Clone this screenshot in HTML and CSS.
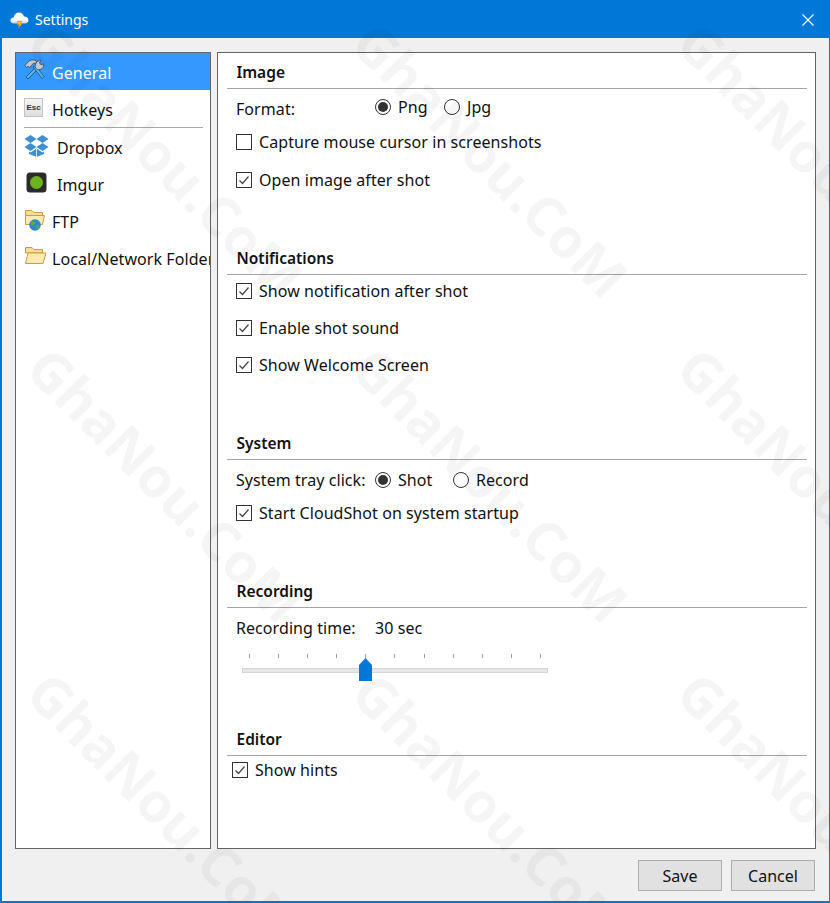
FILE: index.html
```html
<!DOCTYPE html>
<html lang="en">
<head>
<meta charset="utf-8">
<title>Settings</title>
<link rel="stylesheet" href="styles.css">
</head>
<body>
<div class="window">
  <header class="titlebar">
    <svg class="app-icon" width="19" height="18" viewBox="0 0 19 18"><defs><linearGradient id="cloud" x1="0" y1="0" x2="0" y2="1"><stop offset="0" stop-color="#fff"/><stop offset=".65" stop-color="#fff"/><stop offset="1" stop-color="#c9ced3"/></linearGradient></defs><path d="M4 12.5 C1.6 12.5 .5 11 .5 9.4 C.5 7.6 2 6.4 3.6 6.6 C4 3.6 6.2 1.5 9 1.5 C11.6 1.5 13.4 3.2 14 5.6 C16.4 5.5 18.5 7.2 18.5 9.3 C18.5 11.2 17 12.5 15 12.5 Z" fill="url(#cloud)"/><path d="M7.5 10 H12 L10.6 12.4 H12.4 L8.2 17 L9.2 13.6 H7 Z" fill="#f6c21a" stroke="#b98300" stroke-width=".4"/></svg>
    <span class="title">Settings</span>
    <svg class="close" width="12" height="12" viewBox="0 0 12 12"><path d="M.5 .5 L11.5 11.5 M11.5 .5 L.5 11.5" stroke="#fff" stroke-width="1.1" fill="none"/></svg>
  </header>
  <div class="content">
    <div class="panels">
      <nav class="sidebar">
        <div class="nav-item active">
          <svg class="ico ico-tools" width="21" height="21" viewBox="0 0 21 21"><path d="M11.5 8.5 L2 18 L4 20 L13.5 10.5 Z" fill="#58b2ea" stroke="#1f4f73" stroke-width=".8"/><path d="M9 8 L18 19.5 L20 17.5 L11.5 6 Z" fill="#58b2ea" stroke="#1f4f73" stroke-width=".8"/><path d="M1 6.5 L5 2 C7.5 .6 10 .6 12.5 1.8 L12 4.5 L9.5 4.2 L5.5 8.8 L4.2 7.2 L2.6 8.4 Z" fill="#c3c9ce" stroke="#3f474e" stroke-width=".8"/><path d="M11.5 9 C10.5 5.5 12.5 1.5 17 1 L15.5 3.8 L17 5.8 L19.7 4.8 C20.2 8.5 17 11.2 13.6 10.7 Z" fill="#c3c9ce" stroke="#3f474e" stroke-width=".8"/></svg>
          <span>General</span>
        </div>
        <div class="nav-item">
          <span class="esc-key"><span class="esc-text">Esc</span></span>
          <span>Hotkeys</span>
        </div>
        <div class="nav-sep"></div>
        <div class="nav-item wide">
          <svg class="ico ico-dropbox" width="25" height="24" viewBox="0 0 25 24"><path fill="#3d8fd1" d="M6.5 1 L12.5 5 L6.5 9 L.5 5 Z M18.5 1 L24.5 5 L18.5 9 L12.5 5 Z M.5 13 L6.5 9 L12.5 13 L6.5 17 Z M18.5 9 L24.5 13 L18.5 17 L12.5 13 Z M5 17.5 L6.5 18.5 L12.5 14.5 L18.5 18.5 L20 17.5 V20 L12.5 23 L5 20 Z"/><path d="M12.5 15 V23" stroke="#fff" stroke-width=".8" fill="none"/></svg>
          <span>Dropbox</span>
        </div>
        <div class="nav-item wide">
          <svg class="ico imgur" width="21" height="21" viewBox="0 0 21 21"><rect x=".5" y=".5" width="20" height="20" rx="3.5" fill="#2b2b2b"/><circle cx="10.5" cy="10.5" r="6.5" fill="#6db31e"/></svg>
          <span>Imgur</span>
        </div>
        <div class="nav-item">
          <svg class="ico" width="24" height="24" viewBox="0 0 24 24"><path d="M1.5 3.5 H8 L10 5.5 H18.5 V9 H1.5 Z" fill="#f7dd9c" stroke="#cf9a4a"/><path d="M1.5 17.5 V8.5 H20.5 L18.5 17.5 Z" fill="#fdeab0" stroke="#cf9a4a"/><circle cx="11" cy="18" r="5.8" fill="#2f86c9"/><path d="M7 15 C9 13 11 14 11 16 C11 18 8 19 7 17 Z M12 19 C14 17 16 18 15 21 C14 23 12 22 12 19 Z" fill="#5cae3c"/></svg>
          <span>FTP</span>
        </div>
        <div class="nav-item">
          <svg class="ico" width="24" height="24" viewBox="0 0 24 24"><path d="M1.5 3.5 H8 L10 5.5 H18.5 V9 H1.5 Z" fill="#f7dd9c" stroke="#cf9a4a"/><path d="M1.5 19.5 L4 9 H22 L19 19.5 Z" fill="#fdeab0" stroke="#cf9a4a"/></svg>
          <span class="clip">Local/Network Folder</span>
        </div>
      </nav>
      <main class="main">
        <section class="section s-image">
          <h2>Image</h2>
          <div class="rows">
            <div class="row">
              <span class="label lowered">Format:</span>
              <span class="radio on"></span><span class="opt opt-png">Png</span>
              <span class="radio"></span><span class="opt">Jpg</span>
            </div>
            <label class="row"><span class="check"></span>Capture mouse cursor in screenshots</label>
            <label class="row after-gap"><span class="check on"><svg width="14" height="14" viewBox="0 0 14 14"><path d="M2.5 7.5 L5.5 10.5 L11.5 3.5" fill="none" stroke="#444" stroke-width="1.2"/></svg></span>Open image after shot</label>
          </div>
        </section>
        <section class="section s-notify">
          <h2>Notifications</h2>
          <div class="rows">
            <label class="row"><span class="check on"><svg width="14" height="14" viewBox="0 0 14 14"><path d="M2.5 7.5 L5.5 10.5 L11.5 3.5" fill="none" stroke="#444" stroke-width="1.2"/></svg></span>Show notification after shot</label>
            <label class="row"><span class="check on"><svg width="14" height="14" viewBox="0 0 14 14"><path d="M2.5 7.5 L5.5 10.5 L11.5 3.5" fill="none" stroke="#444" stroke-width="1.2"/></svg></span>Enable shot sound</label>
            <label class="row"><span class="check on"><svg width="14" height="14" viewBox="0 0 14 14"><path d="M2.5 7.5 L5.5 10.5 L11.5 3.5" fill="none" stroke="#444" stroke-width="1.2"/></svg></span>Show Welcome Screen</label>
          </div>
        </section>
        <section class="section s-system">
          <h2>System</h2>
          <div class="rows">
            <div class="row">
              <span class="label">System tray click:</span>
              <span class="radio on"></span><span class="opt opt-shot">Shot</span>
              <span class="radio"></span><span class="opt">Record</span>
            </div>
            <label class="row"><span class="check on"><svg width="14" height="14" viewBox="0 0 14 14"><path d="M2.5 7.5 L5.5 10.5 L11.5 3.5" fill="none" stroke="#444" stroke-width="1.2"/></svg></span>Start CloudShot on system startup</label>
          </div>
        </section>
        <section class="section s-record">
          <h2>Recording</h2>
          <div class="rows">
            <div class="row"><span class="label">Recording time:</span><span>30 sec</span></div>
          </div>
          <div class="slider">
            <div class="ticks"><i></i><i></i><i></i><i></i><i></i><i></i><i></i><i></i><i></i><i></i><i></i></div>
            <div class="track"></div>
            <div class="thumb"></div>
          </div>
        </section>
        <section class="section s-editor">
          <h2>Editor</h2>
          <div class="rows">
            <label class="row"><span class="check on"><svg width="14" height="14" viewBox="0 0 14 14"><path d="M2.5 7.5 L5.5 10.5 L11.5 3.5" fill="none" stroke="#444" stroke-width="1.2"/></svg></span>Show hints</label>
          </div>
        </section>
      </main>
    </div>
    <footer class="footer">
      <button class="btn">Save</button>
      <button class="btn">Cancel</button>
    </footer>
  </div>
</div>
<div class="watermarks" aria-hidden="true">
  <span>GhaNou.CoM</span><span>GhaNou.CoM</span><span>GhaNou.CoM</span>
  <span>GhaNou.CoM</span><span>GhaNou.CoM</span><span>GhaNou.CoM</span>
  <span>GhaNou.CoM</span><span>GhaNou.CoM</span><span>GhaNou.CoM</span>
</div>
</body>
</html>
```
FILE: styles.css
```css
* { box-sizing: border-box; }
html, body { margin: 0; padding: 0; }
body {
  width: 830px;
  height: 903px;
  overflow: hidden;
  position: relative;
  font-family: "Noto Sans", "Open Sans", sans-serif;
  font-size: 16px;
  letter-spacing: 0.07px;
  color: #111;
  background: #f0f0f0;
}
.window {
  width: 830px;
  height: 903px;
  display: flex;
  flex-direction: column;
  border: 1px solid #0078d7;
  border-width: 1px 1px 2px 2px;
}
.titlebar {
  height: 37px;
  background: #0078d7;
  display: flex;
  align-items: center;
  color: #fff;
  padding-left: 8px;
  padding-right: 15px;
  flex: none;
}
.app-icon { margin-right: 6px; margin-top: 1px; }
.title { font-size: 14px; letter-spacing: 0; flex: 1; }
.content {
  flex: 1;
  display: flex;
  flex-direction: column;
  padding: 14px 14px 0 13px;
}
.panels { display: flex; gap: 6px; height: 797px; flex: none; }
.sidebar {
  width: 196px;
  border: 1px solid #646464;
  background: #fff;
  overflow: hidden;
  flex: none;
}
.nav-item {
  height: 37px;
  display: flex;
  align-items: center;
  gap: 4px;
  padding-left: 8px;
  padding-top: 3px;
  white-space: nowrap;
}
.nav-item.active { background: #3399ff; color: #fff; }
.nav-item.wide { gap: 8px; }
.ico { flex: none; position: relative; top: -3px; }
.ico-tools { margin-right: 3px; top: -4px; }
.ico-dropbox { top: -2px; }
.imgur { margin: 0 2px 0 2px; }
.esc-key {
  width: 19px;
  height: 19px;
  margin-right: 5px;
  margin-bottom: 6px;
  border: 1px solid #c4c4c4;
  background: linear-gradient(#f4f4f4, #dedede);
  display: flex;
  align-items: center;
  justify-content: center;
  flex: none;
}
.esc-text { font-size: 8px; font-weight: 700; letter-spacing: 0; color: #333; font-family: "Liberation Sans", sans-serif; }
.nav-sep { height: 1px; background: #a9a9a9; margin: 0 7px 0 8px; }
.clip { overflow: hidden; }
.main {
  flex: 1;
  border: 1px solid #646464;
  background: #fff;
  padding: 10px 8px 0 9px;
}
.section { width: 580px; }
.section h2 {
  margin: 0;
  height: 26px;
  line-height: 18px;
  font-size: 15.5px;
  font-weight: 600;
  letter-spacing: 0;
  padding-left: 9.5px;
  border-bottom: 1px solid #a5a5a5;
}
.s-image { height: 186px; }
.s-notify { height: 185px; }
.s-system, .s-record { height: 148px; }
.rows { display: flex; flex-direction: column; padding-left: 9px; }
.s-image .rows { padding-top: 4px; gap: 7px; }
.s-image .after-gap { margin-top: 3px; }
.s-notify .rows { padding-top: 2px; gap: 9px; }
.s-system .rows { padding-top: 6px; gap: 5px; }
.s-record .rows { padding-top: 6px; }
.s-editor .rows { padding-left: 5px; }
.row { height: 28px; display: flex; align-items: center; white-space: nowrap; }
.label { width: 139px; flex: none; }
.lowered { padding-top: 3px; }
.check {
  width: 16px;
  height: 16px;
  border: 1px solid #333;
  margin-right: 7px;
  background: #fff;
  flex: none;
  display: block;
}
.check svg { display: block; margin: 0; }
.radio {
  width: 16px;
  height: 16px;
  border: 1px solid #333;
  border-radius: 50%;
  margin-right: 7px;
  background: #fff;
  flex: none;
  position: relative;
}
.radio.on::after {
  content: "";
  position: absolute;
  inset: 2px;
  border-radius: 50%;
  background: #333;
}
.opt-png { width: 46px; }
.opt-shot { width: 55px; }
.slider { position: relative; width: 306px; margin: 12px 0 0 15px; height: 40px; }
.ticks { display: flex; justify-content: space-between; padding: 0 7px; height: 4px; }
.ticks i { width: 1px; height: 4px; background: #a0a0a0; display: block; }
.track { margin-top: 10px; height: 5px; background: #e7e7e7; border: 1px solid #d6d6d6; }
.thumb {
  position: absolute;
  left: 117px;
  top: 4px;
  width: 13px;
  height: 23px;
  background: #0078d7;
  clip-path: polygon(50% 0, 100% 30%, 100% 100%, 0 100%, 0 30%);
}
.footer { display: flex; justify-content: flex-end; gap: 9px; padding-top: 11px; }
.btn {
  width: 84px;
  height: 31px;
  background: #e1e1e1;
  border: 1px solid #adadad;
  font: inherit;
  color: #111;
  padding: 0;
}
.watermarks {
  position: absolute;
  left: 0;
  top: 0;
  width: 830px;
  height: 903px;
  overflow: hidden;
  display: grid;
  grid-template-columns: repeat(3, 325px);
  grid-template-rows: repeat(3, 325px);
  pointer-events: none;
  font-family: "Open Sans", sans-serif;
  font-weight: 700;
  font-size: 55px;
  letter-spacing: 0;
  color: rgba(0, 0, 0, 0.04);
}
.watermarks span {
  transform-origin: 0 0;
  transform: translate(58px, 12px) rotate(45deg);
  white-space: nowrap;
  line-height: 1;
  height: 55px;
}
```
